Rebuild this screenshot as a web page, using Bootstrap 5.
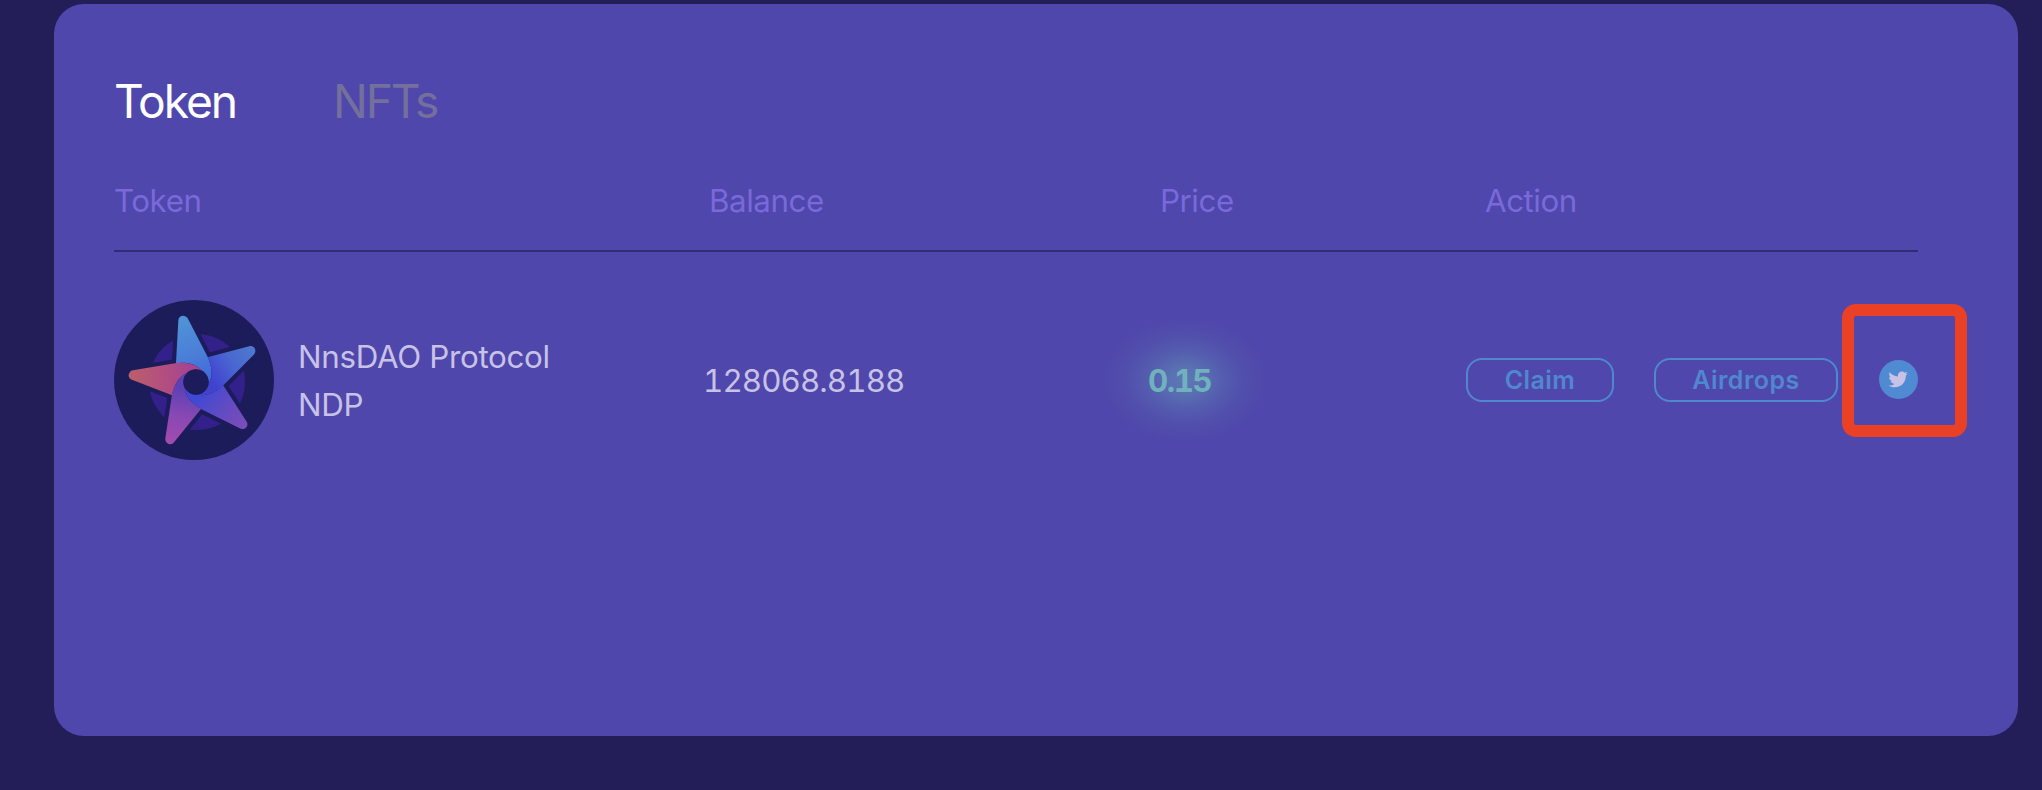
<!DOCTYPE html>
<html lang="en">
<head>
<meta charset="utf-8">
<meta name="viewport" content="width=device-width, initial-scale=1">
<title>Token wallet</title>
<link href="https://cdn.jsdelivr.net/npm/bootstrap@5.3.0/dist/css/bootstrap.min.css" rel="stylesheet">
<style>
body{background:#241e58;font-family:Inter,"Liberation Sans",sans-serif;color:#c8c2e7;font-size:31.3px;line-height:48px;overflow:hidden}
.wallet{margin:4px 24px 0 54px;height:732px;padding:0 100px 0 60px;border:0;border-radius:30px;background:#4f47ab;color:inherit}
.tabs{padding-top:65px;gap:97px;font-size:46.2px;line-height:64px}
.tabs .nav-link{padding:0;color:#746f9d;letter-spacing:-2.1px}
.tabs .nav-link.active{color:#fff}
.token-grid{display:grid;grid-template-columns:590px 444px 318px 1fr}
.head-row{margin-top:44px;height:75px;border-bottom:2px solid #322b77;color:#7a69da;letter-spacing:-.45px}
.head-row div:nth-child(2){padding-left:5px}
.head-row div:nth-child(3){padding-left:12px}
.head-row div:nth-child(4){padding-left:19px}
.data-row{margin-top:48px;height:160px}
.logo{width:160px;height:160px}
.token-name{padding:2px 0 0 24px;letter-spacing:-.3px}
.amount{padding-top:2px;margin-left:-1px;font-variant-numeric:tabular-nums;letter-spacing:-.9px}
.price-cell{padding-top:2px}
.price{position:relative;font-weight:700;color:#6fb2bd;font-variant-numeric:tabular-nums;letter-spacing:-1.5px}
.price span{position:relative}
.price::before{content:"";position:absolute;left:-47px;top:-46px;width:168px;height:128px;background:radial-gradient(closest-side,rgba(108,180,190,.46),rgba(108,180,190,.38) 20%,rgba(108,180,190,.2) 45%,rgba(108,180,190,.07) 70%,rgba(108,180,190,0))}
.pill{height:44px;padding:0;border:2px solid #5088cf;border-radius:16px;color:#5088cf;font-size:25px;font-weight:600;line-height:37px;letter-spacing:.45px}
.pill:hover{color:#5088cf;border-color:#5088cf}
.pill-claim{width:148px}
.pill-drops{width:184px;margin-left:40px}
.bird{width:39px;height:39px;margin-bottom:1px}
.bird svg{display:block}
.marker{position:absolute;left:-37px;top:-56px;width:125px;height:133px;border:12px solid #ea4026;border-radius:14px}
</style>
</head>
<body>
<main class="card wallet">
  <nav class="nav tabs">
    <a class="nav-link active" href="#">Token</a>
    <a class="nav-link" href="#">NFTs</a>
  </nav>
  <div class="token-grid head-row">
    <div>Token</div>
    <div>Balance</div>
    <div>Price</div>
    <div>Action</div>
  </div>
  <div class="token-grid data-row align-items-center">
    <div class="d-flex align-items-center">
      <svg class="logo flex-shrink-0" viewBox="-246 -246 480 480">
        <defs>
          <linearGradient id="g1" gradientUnits="userSpaceOnUse" x1="-40" y1="-190" x2="35" y2="0"><stop stop-color="#4f93d6"/><stop offset=".55" stop-color="#4b7ed8"/><stop offset="1" stop-color="#3f68dc"/></linearGradient>
          <linearGradient id="g2" gradientUnits="userSpaceOnUse" x1="-40" y1="-190" x2="0" y2="-42"><stop stop-color="#4c78cf"/><stop offset=".45" stop-color="#4a68d0"/><stop offset="1" stop-color="#4142d0"/></linearGradient>
          <linearGradient id="g3" gradientUnits="userSpaceOnUse" x1="-40" y1="-190" x2="0" y2="-35"><stop stop-color="#7a4db9"/><stop offset=".45" stop-color="#644bc2"/><stop offset="1" stop-color="#4049d3"/></linearGradient>
          <linearGradient id="g4" gradientUnits="userSpaceOnUse" x1="-50" y1="-190" x2="25" y2="-35"><stop stop-color="#a34bae"/><stop offset=".5" stop-color="#8748b3"/><stop offset="1" stop-color="#5b40b6"/></linearGradient>
          <linearGradient id="g5" gradientUnits="userSpaceOnUse" x1="-40" y1="-190" x2="20" y2="-20"><stop stop-color="#ba5e6c"/><stop offset=".5" stop-color="#b44f7e"/><stop offset="1" stop-color="#a44493"/></linearGradient>
          <path id="blade" d="M-60-56L-53-185C-52-202-32-203-25-191L34-77C46-52 54-20 37 8A38 38 0 0 0 19-32.7C-2.3-57.5-35.2-59.8-60-56Z"/>
        </defs>
        <circle cx="-6" cy="-6" r="240" fill="#1c1c5b"/>
        <circle cx="3" cy="0" r="144" fill="#33208a"/>
        <g fill="#1c1c5b" stroke="#1c1c5b" stroke-width="25" stroke-linejoin="round">
          <use href="#blade"/><use href="#blade" transform="rotate(72)"/><use href="#blade" transform="rotate(144)"/><use href="#blade" transform="rotate(216)"/><use href="#blade" transform="rotate(288)"/>
        </g>
        <use href="#blade" fill="url(#g1)"/>
        <use href="#blade" fill="url(#g2)" transform="rotate(72)"/>
        <use href="#blade" fill="url(#g3)" transform="rotate(144)"/>
        <use href="#blade" fill="url(#g4)" transform="rotate(216)"/>
        <use href="#blade" fill="url(#g5)" transform="rotate(288)"/>
        <circle r="38" fill="#1c1c5b"/>
      </svg>
      <div class="token-name">NnsDAO Protocol<br>NDP</div>
    </div>
    <div class="amount">128068.8188</div>
    <div class="price-cell"><span class="price"><span>0.15</span></span></div>
    <div class="d-flex align-items-center">
      <button class="btn pill pill-claim">Claim</button>
      <button class="btn pill pill-drops">Airdrops</button>
      <a class="bird position-relative ms-auto" href="#" aria-label="Twitter">
        <svg width="39" height="39" viewBox="0 0 39 39"><circle cx="19.5" cy="19.5" r="19.5" fill="#4f8ad2"/><path transform="translate(9.4 9.7) scale(.038)" fill="#c8c2e7" d="M459.37 151.716c.325 4.548.325 9.097.325 13.645 0 138.72-105.583 298.558-298.558 298.558-59.452 0-114.68-17.219-161.137-47.106 8.447.974 16.568 1.299 25.34 1.299 49.055 0 94.213-16.568 130.274-44.832-46.132-.975-84.792-31.188-98.112-72.772 6.498.974 12.995 1.624 19.818 1.624 9.421 0 18.843-1.3 27.614-3.573-48.081-9.747-84.143-51.98-84.143-102.985v-1.299c13.969 7.797 30.214 12.67 47.431 13.319-28.264-18.843-46.781-51.005-46.781-87.391 0-19.492 5.197-37.36 14.294-52.954 51.655 63.675 129.3 105.258 216.365 109.807-1.624-7.797-2.599-15.918-2.599-24.04 0-57.828 46.782-104.934 104.934-104.934 30.213 0 57.502 12.67 76.67 33.137 23.715-4.548 46.456-13.32 66.599-25.34-7.798 24.366-24.366 44.833-46.132 57.827 21.117-2.273 41.584-8.122 60.426-16.243-14.292 20.791-32.161 39.308-52.628 54.253z"/></svg>
        <span class="marker"></span>
      </a>
    </div>
  </div>
</main>
<script src="https://cdn.jsdelivr.net/npm/bootstrap@5.3.0/dist/js/bootstrap.bundle.min.js"></script>
</body>
</html>
